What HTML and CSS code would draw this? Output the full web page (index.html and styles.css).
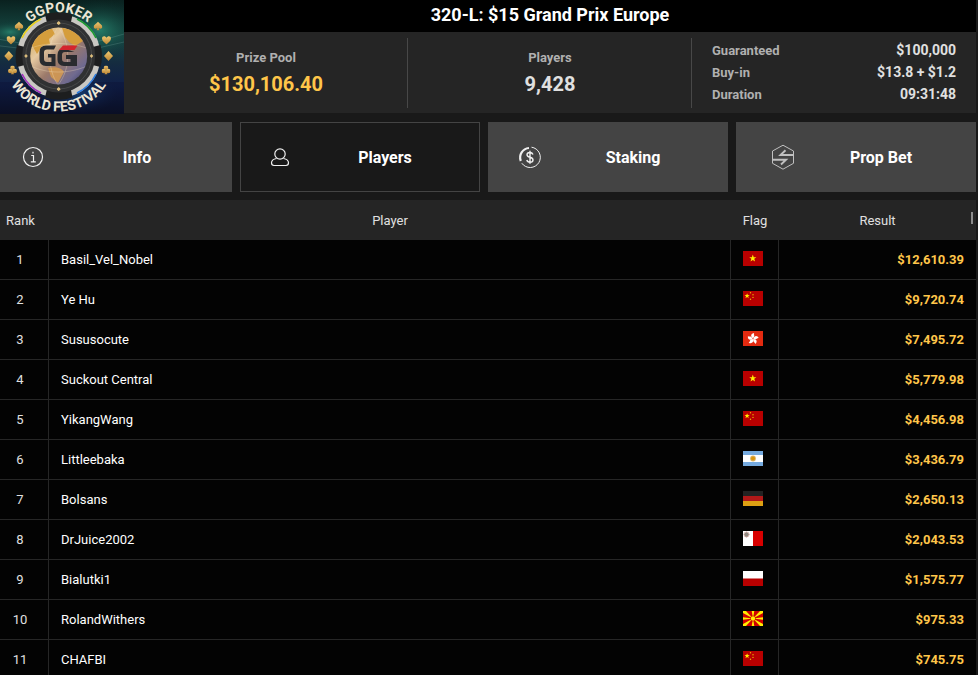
FILE: index.html
```html
<!DOCTYPE html>
<html lang="en">
<head>
  <meta charset="UTF-8" />
  <meta name="viewport" content="width=device-width, initial-scale=1.0" />
  <title>320-L: $15 Grand Prix Europe</title>
  <link rel="stylesheet" href="styles.css">
</head>
<body>
  <!-- shared flags and suits -->
  <svg class="defs" aria-hidden="true">
    <symbol id="star" viewBox="-10 -10 20 20">
      <path d="M0-10 2.4-3.2 9.5-3.1 3.8 1.2 5.9 8.1 0 4-5.9 8.1-3.8 1.2-9.5-3.1-2.4-3.2z" />
    </symbol>
    <symbol id="flag-vn" viewBox="0 0 20 15">
      <rect width="20" height="15" fill="#b80000" />
      <use href="#star" x="6" y="3.6" width="7.6" height="7.6" fill="#ffee00" />
    </symbol>
    <symbol id="flag-cn" viewBox="0 0 20 15">
      <rect width="20" height="15" fill="#b80000" />
      <use href="#star" x="1.3" y="2.2" width="5.6" height="5.6" fill="#ffee00" />
      <g fill="#e8b800">
        <circle cx="7.5" cy="1.7" r=".7" />
        <circle cx="10" cy="3.8" r=".7" />
        <circle cx="10" cy="6.4" r=".7" />
        <circle cx="7.5" cy="8.3" r=".7" />
      </g>
    </symbol>
    <symbol id="flag-hk" viewBox="0 0 20 15">
      <rect width="20" height="15" fill="#e32a10" />
      <g transform="translate(10 7.8)" fill="#fff">
        <path id="petal" d="M0-.4C-3-2.2-2-5.4 1.2-5.7 0-4.2 2.8-3.4 0-.4z" />
        <use href="#petal" transform="rotate(72)" />
        <use href="#petal" transform="rotate(144)" />
        <use href="#petal" transform="rotate(216)" />
        <use href="#petal" transform="rotate(288)" />
      </g>
    </symbol>
    <symbol id="flag-ar" viewBox="0 0 20 15">
      <rect width="20" height="15" fill="#fff" />
      <path d="M0 0h20v4H0zM0 11h20v4H0z" fill="#75aadf" />
      <circle cx="10" cy="7.5" r="2.9" fill="#d9b56a" />
      <circle cx="10" cy="7.5" r="2" fill="#d9950f" />
    </symbol>
    <symbol id="flag-de" viewBox="0 0 20 15">
      <rect width="20" height="5" fill="#222" />
      <rect y="5" width="20" height="5" fill="#b01818" />
      <rect y="10" width="20" height="5" fill="#dda013" />
    </symbol>
    <symbol id="flag-mt" viewBox="0 0 20 15">
      <rect width="10" height="15" fill="#fff" />
      <rect x="10" width="10" height="15" fill="#d80000" />
      <path d="M1.5 1.5l4 4M5.5 1.5l-4 4M.6 3.5h6M3.5.6v6" stroke="#c8a098" stroke-width="1.4" />
      <circle cx="3.5" cy="3.5" r="2" fill="#8d8780" />
    </symbol>
    <symbol id="flag-pl" viewBox="0 0 20 15">
      <rect width="20" height="8" fill="#fff" />
      <rect y="7.5" width="20" height="7.5" fill="#b80000" />
    </symbol>
    <symbol id="flag-mk" viewBox="0 0 20 15">
      <rect width="20" height="15" fill="#d00000" />
      <path d="M0 0h3L10 7.5 0 2zM20 0h-3L10 7.5 20 2zM0 15h3L10 7.5 0 13zM20 15h-3L10 7.5 20 13zM8.7 0h2.6L10 7.5zM8.7 15h2.6L10 7.5zM0 6.2v2.6L10 7.5zM20 6.2v2.6L10 7.5z" fill="#fe0" />
      <circle cx="10" cy="7.5" r="2.8" fill="#d00000" />
      <circle cx="10" cy="7.5" r="2.2" fill="#fe0" />
    </symbol>
    <symbol id="spade" viewBox="0 0 10 10">
      <path d="M5 0C6 2 9.8 3.5 9.8 6 9.8 8 7 8.5 5.7 7.2L6.7 10H3.3l1-2.8C3 8.5.2 8 .2 6 .2 3.5 4 2 5 0z" />
    </symbol>
    <symbol id="heart" viewBox="0 0 10 10">
      <path d="M5 10C3 7.5 0 6 0 3.2 0 .2 3.8 0 5 2.5 6.2 0 10 .2 10 3.2 10 6 7 7.5 5 10z" />
    </symbol>
    <symbol id="diamond" viewBox="0 0 10 10">
      <path d="M5 0 9.5 5 5 10 .5 5z" />
    </symbol>
    <symbol id="club" viewBox="0 0 10 10">
      <circle cx="5" cy="2.5" r="2.5" /><circle cx="2.5" cy="6" r="2.5" /><circle cx="7.5" cy="6" r="2.5" />
      <path d="M5 4 6.7 10H3.3z" />
    </symbol>
  </svg>

  <main class="lobby">
    <header class="summary">
      <svg class="logo" viewBox="-8 0 132 114" role="img" aria-label="GGPoker World Festival">
        <defs>
          <linearGradient id="arena" x1="0" y1="0" x2="0" y2="1">
            <stop offset="0" stop-color="#0a211f" />
            <stop offset=".3" stop-color="#164943" />
            <stop offset=".55" stop-color="#152c40" />
            <stop offset=".75" stop-color="#101f48" />
            <stop offset="1" stop-color="#0a0e1e" />
          </linearGradient>
          <radialGradient id="light">
            <stop offset="0" stop-color="#2a8a72" stop-opacity=".8" />
            <stop offset="1" stop-color="#0a2a2a" stop-opacity="0" />
          </radialGradient>
          <radialGradient id="blue">
            <stop offset="0" stop-color="#1c5a9a" />
            <stop offset="1" stop-color="#102040" stop-opacity="0" />
          </radialGradient>
          <linearGradient id="globe" x1="0" y1="0" x2="1" y2="1">
            <stop offset="0" stop-color="#c8a04a" />
            <stop offset=".3" stop-color="#e6c9a0" />
            <stop offset=".55" stop-color="#9c7a6a" />
            <stop offset=".8" stop-color="#6f6a90" />
            <stop offset="1" stop-color="#33335a" />
          </linearGradient>
          <linearGradient id="gold" x1="0" y1="0" x2="0" y2="1">
            <stop offset="0" stop-color="#efc972" />
            <stop offset="1" stop-color="#bb8432" />
          </linearGradient>
          <path id="arc-top" d="M14.7 56a44 44 0 0 1 88 0" />
          <path id="arc-bottom" d="M3.2 56a55.5 55.5 0 0 0 111 0" />
          <clipPath id="globe-clip"><circle cx="58.7" cy="56" r="28.5" /></clipPath>
        </defs>
        <rect x="-8" width="132" height="114" fill="url(#arena)" />
        <ellipse cx="100" cy="30" rx="42" ry="32" fill="url(#light)" />
        <ellipse cx="10" cy="32" rx="26" ry="12" fill="url(#light)" />
        <ellipse cx="75" cy="92" rx="45" ry="22" fill="url(#blue)" />
        <path d="M-8 38 20 43M-8 45 18 48M96 42 124 34M98 48 124 42" stroke="#6a9a94" stroke-width="1" opacity=".3" />
        <path d="M-8 82h132v32H-8z" fill="#0c1230" opacity=".35" />

        <circle cx="58.7" cy="56" r="42" fill="#c9c7c2" />
        <g fill="none" stroke-width="1.6">
          <path d="M22 38A41 41 0 0 1 41 19" stroke="#e8d21c" />
          <path d="M77 19A41 41 0 0 1 96 38" stroke="#1c9a30" />
          <path d="M22 74A41 41 0 0 0 41 93" stroke="#a02cc0" />
          <path d="M77 93A41 41 0 0 0 96 74" stroke="#2a7ce0" />
        </g>
        <path d="M45 14.5a44 44 0 0 1 27.5 0L70 27H48zM45 97.5a44 44 0 0 0 27.5 0L70 85H48zM17 45a43 43 0 0 0 0 22l12-3V48zM100.5 45a43 43 0 0 1 0 22l-12-3V48z" fill="#1d1e1f" />
        <circle cx="58.7" cy="56" r="36.5" fill="#303132" />
        <circle cx="58.7" cy="56" r="33" fill="none" stroke="#484949" stroke-width="1" />
        <circle cx="58.7" cy="56" r="28.5" fill="url(#globe)" />
        <g clip-path="url(#globe-clip)">
          <path d="M32 45c4-10 12-16 20-16l3 5-6 5 1 5-8 2-5 8zM62 28c9 0 17 6 21 13l-8 5-6-4-4-5z" fill="#d59d3c" />
          <path d="M48 68c7-2 14 0 16 4l-6 11-7-6z" fill="#dc9d4c" opacity=".8" />
          <path d="M31 48c16-6 38-6 56 0M31 66c16 8 38 8 56 0M58 27c-11 16-11 42 0 58M58 27c13 16 13 42 0 58" fill="none" stroke="#f6e6c4" stroke-width="1" opacity=".3" />
        </g>
        <path d="M56 45.5H46q-6.5 0-6.5 6.5v7.5q0 6.5 6.5 6.5h9.5V54h-7.5v3.5h3.5V62H47q-3 0-3-3v-6.5q0-3 3-3h7z" fill="#292b2f" />
        <path d="M74.5 52H65q-3 0-3 3v4q0 3 3 3h5.5v-3H66v-4h11v11H64q-6.5 0-6.5-6.5V55q0-6.5 6.5-6.5z" fill="#292b2f" />
        <path d="M63 45.5h14.5l-3 4.5H59z" fill="#d3252e" />
        <g fill="#dcbd7c">
          <use href="#spade" x="56.7" y="21" width="4" height="4" />
          <use href="#spade" x="56.7" y="87" width="4" height="4" />
          <use href="#diamond" x="24" y="54" width="4" height="4" />
          <use href="#diamond" x="89.5" y="54" width="4" height="4" />
        </g>
        <g fill="url(#gold)">
          <use href="#spade" x="14.5" y="21.5" width="9" height="9" />
          <use href="#heart" x="6.5" y="35.5" width="9" height="9" />
          <use href="#diamond" x="3.8" y="51" width="10" height="10" />
          <use href="#club" x="8" y="65.5" width="9" height="9" />
          <use href="#spade" x="93.5" y="21.5" width="9" height="9" />
          <use href="#heart" x="102" y="35.5" width="9" height="9" />
          <use href="#diamond" x="103.5" y="51" width="10" height="10" />
          <use href="#club" x="101.5" y="65.5" width="9" height="9" />
        </g>
        <text class="logo-text"><textPath href="#arc-top" startOffset="50%">GGPOKER</textPath></text>
        <text class="logo-text"><textPath href="#arc-bottom" startOffset="50%">WORLD FESTIVAL</textPath></text>
      </svg>
      <div class="summary-main">
        <h1>320-L: $15 Grand Prix Europe</h1>
        <div class="stats">
          <div class="stat">
            <span class="stat-label">Prize Pool</span>
            <span class="stat-value gold">$130,106.40</span>
          </div>
          <div class="stat">
            <span class="stat-label">Players</span>
            <span class="stat-value">9,428</span>
          </div>
          <dl class="details">
            <div><dt>Guaranteed</dt><dd>$100,000</dd></div>
            <div><dt>Buy-in</dt><dd>$13.8 + $1.2</dd></div>
            <div><dt>Duration</dt><dd>09:31:48</dd></div>
          </dl>
        </div>
      </div>
    </header>

    <nav class="tabs">
      <button type="button" class="tab">
        <svg viewBox="0 0 60 68" aria-hidden="true">
          <circle cx="40" cy="34" r="9.5" />
          <path d="M38.2 32.5h2.3v6M37.8 38.8h5M40 28.8v1.8" />
        </svg>
        <span>Info</span>
      </button>
      <button type="button" class="tab active">
        <svg viewBox="0 0 60 68" aria-hidden="true">
          <circle cx="39" cy="31" r="5.2" />
          <path d="M35.5 35.5c-3.3.6-5 1.9-5 4.3 0 1.8.8 2.7 2.5 2.7h12c1.7 0 2.5-.9 2.5-2.7 0-2.4-1.7-3.7-5-4.3" />
        </svg>
        <span>Players</span>
      </button>
      <button type="button" class="tab">
        <svg viewBox="0 0 60 68" aria-hidden="true">
          <path d="M42.5 24.2a10.2 10.2 0 1 1-9.7 16" stroke-width="1" />
          <path d="M31.8 38a9.6 9.6 0 0 1 8.2-13" stroke-width="2.2" />
          <path d="M44 31.5q-.8-2-3.2-2-2.8 0-2.8 2.3 0 1.7 3 2.5t3 2.6q0 2.3-3 2.3-2.5 0-3.2-2.2M41 27.8v13" stroke-width="1.4" />
        </svg>
        <span>Staking</span>
      </button>
      <button type="button" class="tab">
        <svg class="dim" viewBox="0 0 60 68" aria-hidden="true">
          <path d="M46 22.2 56.5 28v12.3L46 46.2 35.5 40.3V28z" stroke-width="1" />
          <path d="M56.5 32H43.5l5-4.7M35.5 36.8H49l-5 4.7" stroke-width="1.9" />
        </svg>
        <span>Prop Bet</span>
      </button>
    </nav>

    <section class="results">
      <table>
        <colgroup>
          <col class="col-rank"><col><col class="col-flag"><col class="col-result">
        </colgroup>
        <thead>
          <tr><th>Rank</th><th>Player</th><th>Flag</th><th>Result</th></tr>
        </thead>
        <tbody>
          <tr><td>1</td><td>Basil_Vel_Nobel</td><td><svg class="flag" role="img" aria-label="Vietnam"><use href="#flag-vn" /></svg></td><td>$12,610.39</td></tr>
          <tr><td>2</td><td>Ye Hu</td><td><svg class="flag" role="img" aria-label="China"><use href="#flag-cn" /></svg></td><td>$9,720.74</td></tr>
          <tr><td>3</td><td>Sususocute</td><td><svg class="flag" role="img" aria-label="Hong Kong"><use href="#flag-hk" /></svg></td><td>$7,495.72</td></tr>
          <tr><td>4</td><td>Suckout Central</td><td><svg class="flag" role="img" aria-label="Vietnam"><use href="#flag-vn" /></svg></td><td>$5,779.98</td></tr>
          <tr><td>5</td><td>YikangWang</td><td><svg class="flag" role="img" aria-label="China"><use href="#flag-cn" /></svg></td><td>$4,456.98</td></tr>
          <tr><td>6</td><td>Littleebaka</td><td><svg class="flag" role="img" aria-label="Argentina"><use href="#flag-ar" /></svg></td><td>$3,436.79</td></tr>
          <tr><td>7</td><td>Bolsans</td><td><svg class="flag" role="img" aria-label="Germany"><use href="#flag-de" /></svg></td><td>$2,650.13</td></tr>
          <tr><td>8</td><td>DrJuice2002</td><td><svg class="flag" role="img" aria-label="Malta"><use href="#flag-mt" /></svg></td><td>$2,043.53</td></tr>
          <tr><td>9</td><td>Bialutki1</td><td><svg class="flag" role="img" aria-label="Poland"><use href="#flag-pl" /></svg></td><td>$1,575.77</td></tr>
          <tr><td>10</td><td>RolandWithers</td><td><svg class="flag" role="img" aria-label="North Macedonia"><use href="#flag-mk" /></svg></td><td>$975.33</td></tr>
          <tr><td>11</td><td>CHAFBI</td><td><svg class="flag" role="img" aria-label="China"><use href="#flag-cn" /></svg></td><td>$745.75</td></tr>
        </tbody>
      </table>
      <div class="scroll-thumb"></div>
    </section>
  </main>
</body>
</html>
```
FILE: styles.css
```css
:root {
  --page: #191919;
  --panel: #252525;
  --tab: #444444;
  --line: #262626;
  --text: #e0e0e0;
  --muted: #b0b0b0;
  --gold: #ffc64a;
}

* {
  margin: 0;
  padding: 0;
  box-sizing: border-box;
}

body {
  background: var(--page);
  color: var(--text);
  font-family: Roboto, "Liberation Sans", sans-serif;
  font-size: 13px;
  line-height: 20px;
  overflow: hidden;
}

.defs {
  display: none;
}

/* the lobby runs under the left edge of the window */
.lobby {
  height: 100vh;
  margin-left: -8px;
  padding-right: 2px;
  display: flex;
  flex-direction: column;
  gap: 8px;
}

.summary {
  display: flex;
  height: 114px;
  flex: none;
}

.logo {
  width: 132px;
  height: 114px;
  flex: none;
  overflow: visible;
}

.logo-text {
  font-size: 14px;
  font-weight: 700;
  fill: #ece6d6;
  text-anchor: middle;
}

.summary-main {
  flex: 1;
}

h1 {
  height: 32px;
  background: #000;
  color: #fff;
  font-size: 18px;
  font-weight: 700;
  line-height: 30px;
  text-align: center;
}

.stats {
  display: grid;
  grid-template-columns: repeat(3, 1fr);
  padding: 6px 0 5px;
  background: var(--panel);
}

.stat {
  height: 70px;
  display: flex;
  flex-direction: column;
  align-items: center;
  padding-top: 10px;
  box-shadow: inset -1px 0 #484848;
}

.stat-label {
  color: var(--muted);
  font-weight: 700;
}

.stat-value {
  font-size: 20px;
  font-weight: 700;
  line-height: 32px;
}

.gold {
  color: var(--gold);
}

.details {
  padding: 2px 20px;
  font-weight: 700;
}

.details div {
  display: flex;
  justify-content: space-between;
  height: 22px;
  line-height: 22px;
}

.details dt {
  color: var(--muted);
}

.details dd {
  font-size: 14px;
  line-height: 20px;
}

.tabs {
  display: grid;
  grid-template-columns: repeat(4, 1fr);
  gap: 8px;
  flex: none;
}

.tab {
  display: flex;
  align-items: center;
  height: 70px;
  padding-right: 10px;
  background: var(--tab);
  border: 1px solid var(--tab);
  color: #fff;
  font-family: inherit;
  font-size: 16px;
  font-weight: 700;
  cursor: pointer;
}

.tab svg {
  width: 60px;
  height: 68px;
  fill: none;
  stroke: #f0f0f0;
  stroke-width: 1.2;
}

.tab .dim {
  stroke: #c0c0c0;
}

.tab span {
  flex: 1;
}

.tab.active {
  background: var(--page);
}

.results {
  position: relative;
  flex: 1;
  min-height: 0;
  overflow: hidden;
}

table {
  width: 100%;
  table-layout: fixed;
  border-collapse: separate;
  border-spacing: 0;
}

.col-rank {
  width: 57px;
}

.col-flag {
  width: 48px;
}

.col-result {
  width: 197px;
}

th {
  height: 40px;
  padding-top: 2px;
  background: var(--panel);
  font-weight: 400;
}

td {
  height: 40px;
  padding: 0 12px;
  background: #030303;
  border-right: 1px solid var(--line);
  border-bottom: 1px solid var(--line);
  color: #fff;
}

td:first-child {
  color: var(--text);
  text-align: center;
}

td:last-child {
  border-right: none;
  color: var(--gold);
  font-weight: 700;
  text-align: right;
}

.flag {
  display: block;
  width: 20px;
  height: 15px;
  margin-bottom: 2px;
}

.scroll-thumb {
  position: absolute;
  top: 12px;
  right: 3px;
  width: 2px;
  height: 12px;
  background: #8c8c8c;
}
```
